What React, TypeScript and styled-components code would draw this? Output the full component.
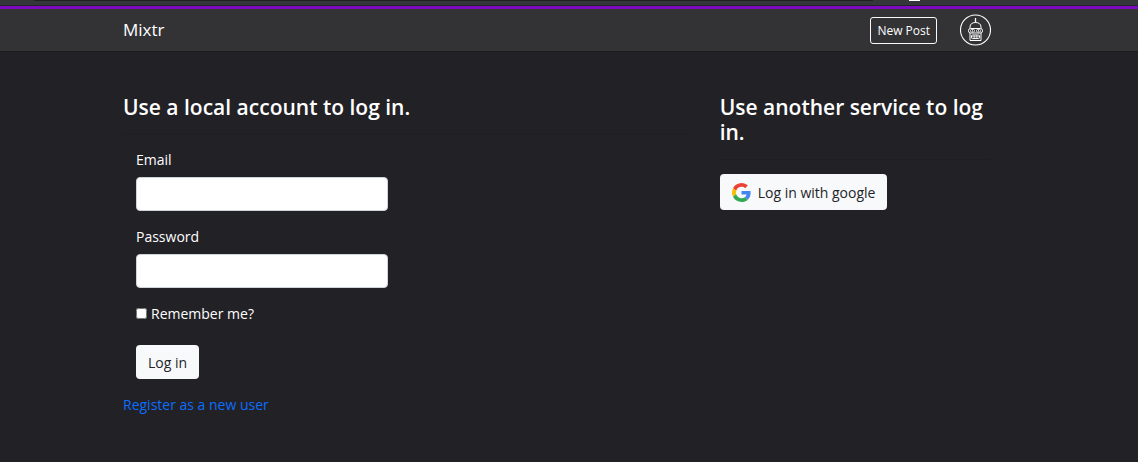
import React from "react";
import styled, { createGlobalStyle } from "styled-components";

const Global = createGlobalStyle`
  *, *::before, *::after { box-sizing: border-box; }
  body {
    margin: 0;
    min-height: 100vh;
    background: #222126;
    color: #fff;
    font: 400 14px/21px "Segoe UI", "Open Sans", "Noto Sans", sans-serif;
  }
  h1, hr { margin: 0; }
`;

const TopStrip = styled.div`
  display: flex;
  align-items: flex-start;
  gap: 36px;
  height: 9px;
  padding-left: 34px;
  background: #35363a;
  border-bottom: 3px solid #7b0ac0;
  box-shadow: inset 0 -1px 0 #242428;
`;

const AddressBar = styled.div`
  width: 76%;
  height: 1px;
  background: #202124;
`;

const TabMark = styled.div`
  width: 11px;
  height: 1px;
  background: #fff;
`;

const Header = styled.header`
  background: #333335;
  border-bottom: 1px solid #1b1b1e;
  padding-right: 24px;
`;

const Container = styled.div`
  width: 100%;
  max-width: 896px;
  margin: 0 auto;
  padding: 0 14px;
`;

const Nav = styled(Container)`
  display: flex;
  align-items: center;
  height: 42px;
`;

const Brand = styled.a`
  margin-right: auto;
  color: #fff;
  font-size: 17px;
  line-height: 26px;
  text-decoration: none;
`;

const NewPost = styled.button`
  height: 27px;
  margin-right: 23px;
  padding: 0 6px;
  border: 1px solid #f8f9fa;
  border-radius: 3px;
  background: transparent;
  color: #fff;
  font: inherit;
  font-size: 12px;
`;

const Avatar = styled.button`
  display: flex;
  padding: 0;
  border: 0;
  background: transparent;
`;

const Main = styled.main`
  padding: 43px 24px 28px 0;
`;

const Columns = styled(Container)`
  display: flex;
  gap: 28px;
`;

const LocalAccount = styled.section`
  flex: 1;
`;

const OtherService = styled.section`
  flex: 0 0 calc(100% / 3 - 18px);
`;

const Title = styled.h1`
  font-size: 21px;
  font-weight: 600;
  line-height: 25px;
`;

const Rule = styled.hr`
  margin: 14px 0;
  border: 0;
  border-top: 1px solid #1f1e22;
`;

const Form = styled.form`
  padding-left: 13px;
`;

const Field = styled.div`
  display: flex;
  flex-direction: column;
  gap: 7px;
  margin-bottom: 15px;
`;

const TextInput = styled.input`
  width: 252px;
  height: 34px;
  padding: 5px 11px;
  border: 1px solid #ced4da;
  border-radius: 4px;
  background: #fff;
  font: inherit;
`;

const Remember = styled.label`
  display: flex;
  align-items: center;
  gap: 4px;
  margin-bottom: 21px;
`;

const Check = styled.input`
  width: 11px;
  height: 11px;
  margin: 0;
`;

const LightButton = styled.button<{ $height: number }>`
  display: flex;
  align-items: center;
  gap: 7px;
  height: ${(p) => p.$height}px;
  padding: 0 12px;
  border: 0;
  border-radius: 4px;
  background: #f8f9fa;
  color: #212529;
  font: inherit;
`;

const Register = styled.a`
  display: inline-block;
  margin-top: 15px;
  color: #0d6efd;
  text-decoration: none;
`;

const Robot = () => (
  <svg width="31" height="32" viewBox="0 0 31 32" fill="none" stroke="#fff" aria-hidden="true">
    <circle cx="15.5" cy="16" r="15" strokeWidth="1.1" />
    <path d="M15.5 4v4.500" strokeWidth="1.3" />
    <path d="M10 14.500V13c0-3 2.200-4.500 5.500-4.500S21 10 21 13v1.500" />
    <path d="M10 19v7.500h11V19" />
    <rect x="8.500" y="14.500" width="14" height="4.500" rx="2" />
    <rect x="10.500" y="15.500" width="4" height="2.500" rx="1" strokeWidth=".8" />
    <rect x="16.500" y="15.500" width="4" height="2.500" rx="1" strokeWidth=".8" />
    <path d="M12 16.800h1M18 16.800h1" />
    <rect x="11.500" y="21" width="8" height="3.600" rx="1" />
    <path d="M14.200 21v3.600M16.800 21v3.600M11.500 22.800h8" strokeWidth=".7" />
  </svg>
);

const Google = () => (
  <svg width="19" height="19" viewBox="0 0 48 48" aria-hidden="true">
    <path fill="#EA4335" d="M24 9.500c3.540 0 6.710 1.220 9.210 3.600l6.850-6.850C35.900 2.380 30.470 0 24 0 14.620 0 6.510 5.380 2.560 13.220l7.980 6.190C12.430 13.720 17.740 9.500 24 9.500z" />
    <path fill="#4285F4" d="M46.980 24.550c0-1.570-.15-3.090-.38-4.550H24v9.020h12.940c-.58 2.960-2.260 5.480-4.780 7.180l7.730 6c4.510-4.180 7.090-10.360 7.090-17.650z" />
    <path fill="#FBBC05" d="M10.530 28.590c-.48-1.450-.76-2.990-.76-4.590s.27-3.140.76-4.590l-7.980-6.190C.92 16.460 0 20.120 0 24c0 3.880.92 7.540 2.560 10.780l7.970-6.190z" />
    <path fill="#34A853" d="M24 48c6.480 0 11.930-2.130 15.890-5.810l-7.730-6c-2.150 1.450-4.920 2.300-8.160 2.300-6.260 0-11.570-4.220-13.470-9.910l-7.980 6.190C6.510 42.620 14.620 48 24 48z" />
  </svg>
);

export default function App() {
  return (
    <>
      <Global />
      <TopStrip>
        <AddressBar />
        <TabMark />
      </TopStrip>
      <Header>
        <Nav as="nav">
          <Brand href="#">Mixtr</Brand>
          <NewPost type="button">New Post</NewPost>
          <Avatar type="button" aria-label="Account">
            <Robot />
          </Avatar>
        </Nav>
      </Header>
      <Main>
        <Columns>
          <LocalAccount>
            <Title>Use a local account to log in.</Title>
            <Rule />
            <Form onSubmit={(e) => e.preventDefault()}>
              <Field>
                <label htmlFor="email">Email</label>
                <TextInput id="email" type="email" />
              </Field>
              <Field>
                <label htmlFor="password">Password</label>
                <TextInput id="password" type="password" />
              </Field>
              <Remember>
                <Check type="checkbox" />
                Remember me?
              </Remember>
              <LightButton type="submit" $height={34}>Log in</LightButton>
            </Form>
            <Register href="#">Register as a new user</Register>
          </LocalAccount>
          <OtherService>
            <Title>Use another service to log in.</Title>
            <Rule />
            <LightButton type="button" $height={36}>
              <Google />
              Log in with google
            </LightButton>
          </OtherService>
        </Columns>
      </Main>
    </>
  );
}
